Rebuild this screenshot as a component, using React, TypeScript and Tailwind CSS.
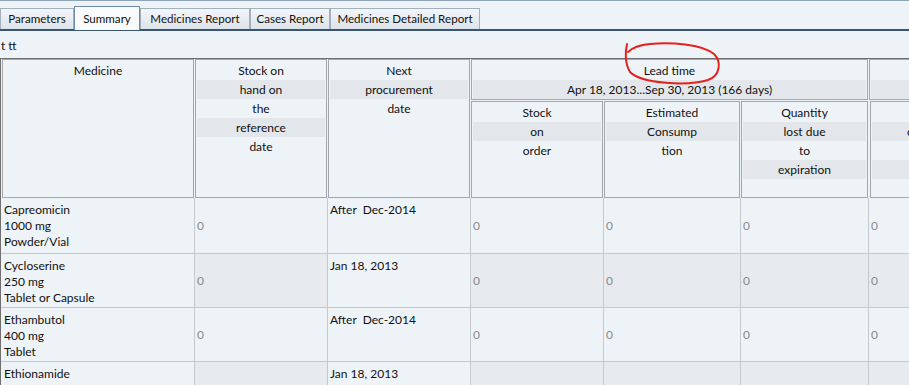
import React from "react";

const tabs = [
  { label: "Parameters", w: "w-[74px]" },
  { label: "Summary", w: "w-[66px]" },
  { label: "Medicines Report", w: "w-[110px]" },
  { label: "Cases Report", w: "w-[80px]" },
  { label: "Medicines Detailed Report", w: "w-[150px]" },
];

const rows = [
  { name: ["Capreomicin", "1000 mg", "Powder/Vial"], next: "After  Dec-2014" },
  { name: ["Cycloserine", "250 mg", "Tablet or Capsule"], next: "Jan 18, 2013" },
  { name: ["Ethambutol", "400 mg", "Tablet"], next: "After  Dec-2014" },
  { name: ["Ethionamide", "250 mg", "Tablet"], next: "Jan 18, 2013" },
];

// header lines: every second line gets the grey band
function Lines({ lines }: { lines: string[] }) {
  return (
    <div className="flex flex-col px-px">
      {lines.map((l, i) => (
        <div
          key={i}
          className={
            "h-[19px] whitespace-nowrap text-center leading-[19px] " + (i % 2 === 1 ? "bg-[#e3e7eb]" : "")
          }
        >
          {l}
        </div>
      ))}
    </div>
  );
}

function HeadCell({ lines, className = "" }: { lines: string[]; className?: string }) {
  return (
    <div className={"overflow-hidden border border-[#a4a8ac] pt-px " + className}>
      <Lines lines={lines} />
    </div>
  );
}

export default function App() {
  return (
    <div className="relative h-[385px] w-[909px] overflow-hidden bg-[#eef3f8] font-['Lato','Segoe_UI',sans-serif] text-[12px] text-[#111]">
      {/* tab strip */}
      <div className="flex h-[31px] items-end border-t border-[#8fa3b6] border-b-2 border-b-[#3a556f] bg-[#eef3f8] text-[11.6px]">
        {tabs.map((t) => {
          const active = t.label === "Summary";
          return (
            <div
              key={t.label}
              className={
                (active
                  ? "-mb-px flex h-[24px] items-center justify-center border border-b-0 border-[#6d8aa4] bg-[#f8fafc] "
                  : "flex h-[21px] items-center justify-center border border-b-0 border-[#a2afbc] bg-gradient-to-b from-[#f3f6f9] to-[#dce3ea] ") +
                t.w
              }
            >
              {t.label}
            </div>
          );
        })}
      </div>

      <div className="mt-[7px] h-[16px] pl-px leading-[16px]">t tt</div>

      {/* table */}
      <div className="mt-[4px] w-[1100px] border-l border-t border-[#6f6f6f]">
        <div className="grid h-[139px] grid-cols-[192px_132px_142px_397px_300px] gap-px pl-px">
          <HeadCell lines={["Medicine"]} />
          <HeadCell lines={["Stock on", "hand on", "the", "reference", "date"]} />
          <HeadCell lines={["Next", "procurement", "date"]} />
          <div className="flex flex-col gap-px">
            <HeadCell lines={["Lead time", "Apr 18, 2013...Sep 30, 2013 (166 days)"]} className="h-[41px]" />
            <div className="grid flex-1 grid-cols-[132px_136px_127px] gap-px">
              <HeadCell lines={["Stock", "on", "order"]} />
              <HeadCell lines={["Estimated", "Consump", "tion"]} />
              <HeadCell lines={["Quantity", "lost due", "to", "expiration"]} />
            </div>
          </div>
          <div className="flex flex-col gap-px">
            <HeadCell lines={["\u00a0", "\u00a0"]} className="h-[41px]" />
            <div className="grid flex-1 grid-cols-[130px] gap-px pl-px">
              <HeadCell lines={["Stock", "on hand at", "the end", "of period"]} />
            </div>
          </div>
        </div>

        <div className="flex flex-col gap-px bg-[#c5c9cd]">
          {rows.map((r, i) => {
            const shade = i % 2 === 1 ? "bg-[#e7ebef]" : "bg-[#eef3f8]";
            return (
              <div
                key={r.name[0]}
                className={
                  "grid grid-cols-[193px_132px_142px_132px_136px_127px_200px] gap-px " +
                  (i === 0 ? "h-[55px]" : "h-[53px]")
                }
              >
                <div className="bg-[#eef3f8] pl-[3px] pt-[4px] leading-[16px]">
                  {r.name.map((n) => (
                    <div key={n}>{n}</div>
                  ))}
                </div>
                <div className={"flex items-center pl-[2px] text-[#8a8a8a] " + shade}>0</div>
                <div className="whitespace-pre bg-[#eef3f8] pl-[2px] pt-[4px] leading-[16px]">{r.next}</div>
                {[0, 1, 2, 3].map((k) => (
                  <div key={k} className={"flex items-center pl-[2px] text-[#8a8a8a] " + shade}>
                    0
                  </div>
                ))}
              </div>
            );
          })}
        </div>
      </div>

      {/* hand-drawn red mark around "Lead time" */}
      <svg className="pointer-events-none absolute left-[618px] top-[38px]" width="110" height="52" viewBox="0 0 110 52">
        <path
          d="M9 6 C 7 14, 7 26, 12 34 C 24 46, 70 48, 90 42 C 102 38, 104 24, 96 16 C 84 6, 52 4, 32 6 C 22 7, 14 10, 10 14"
          fill="none"
          stroke="#e3221c"
          strokeWidth="2"
          strokeLinecap="round"
        />
      </svg>
    </div>
  );
}
